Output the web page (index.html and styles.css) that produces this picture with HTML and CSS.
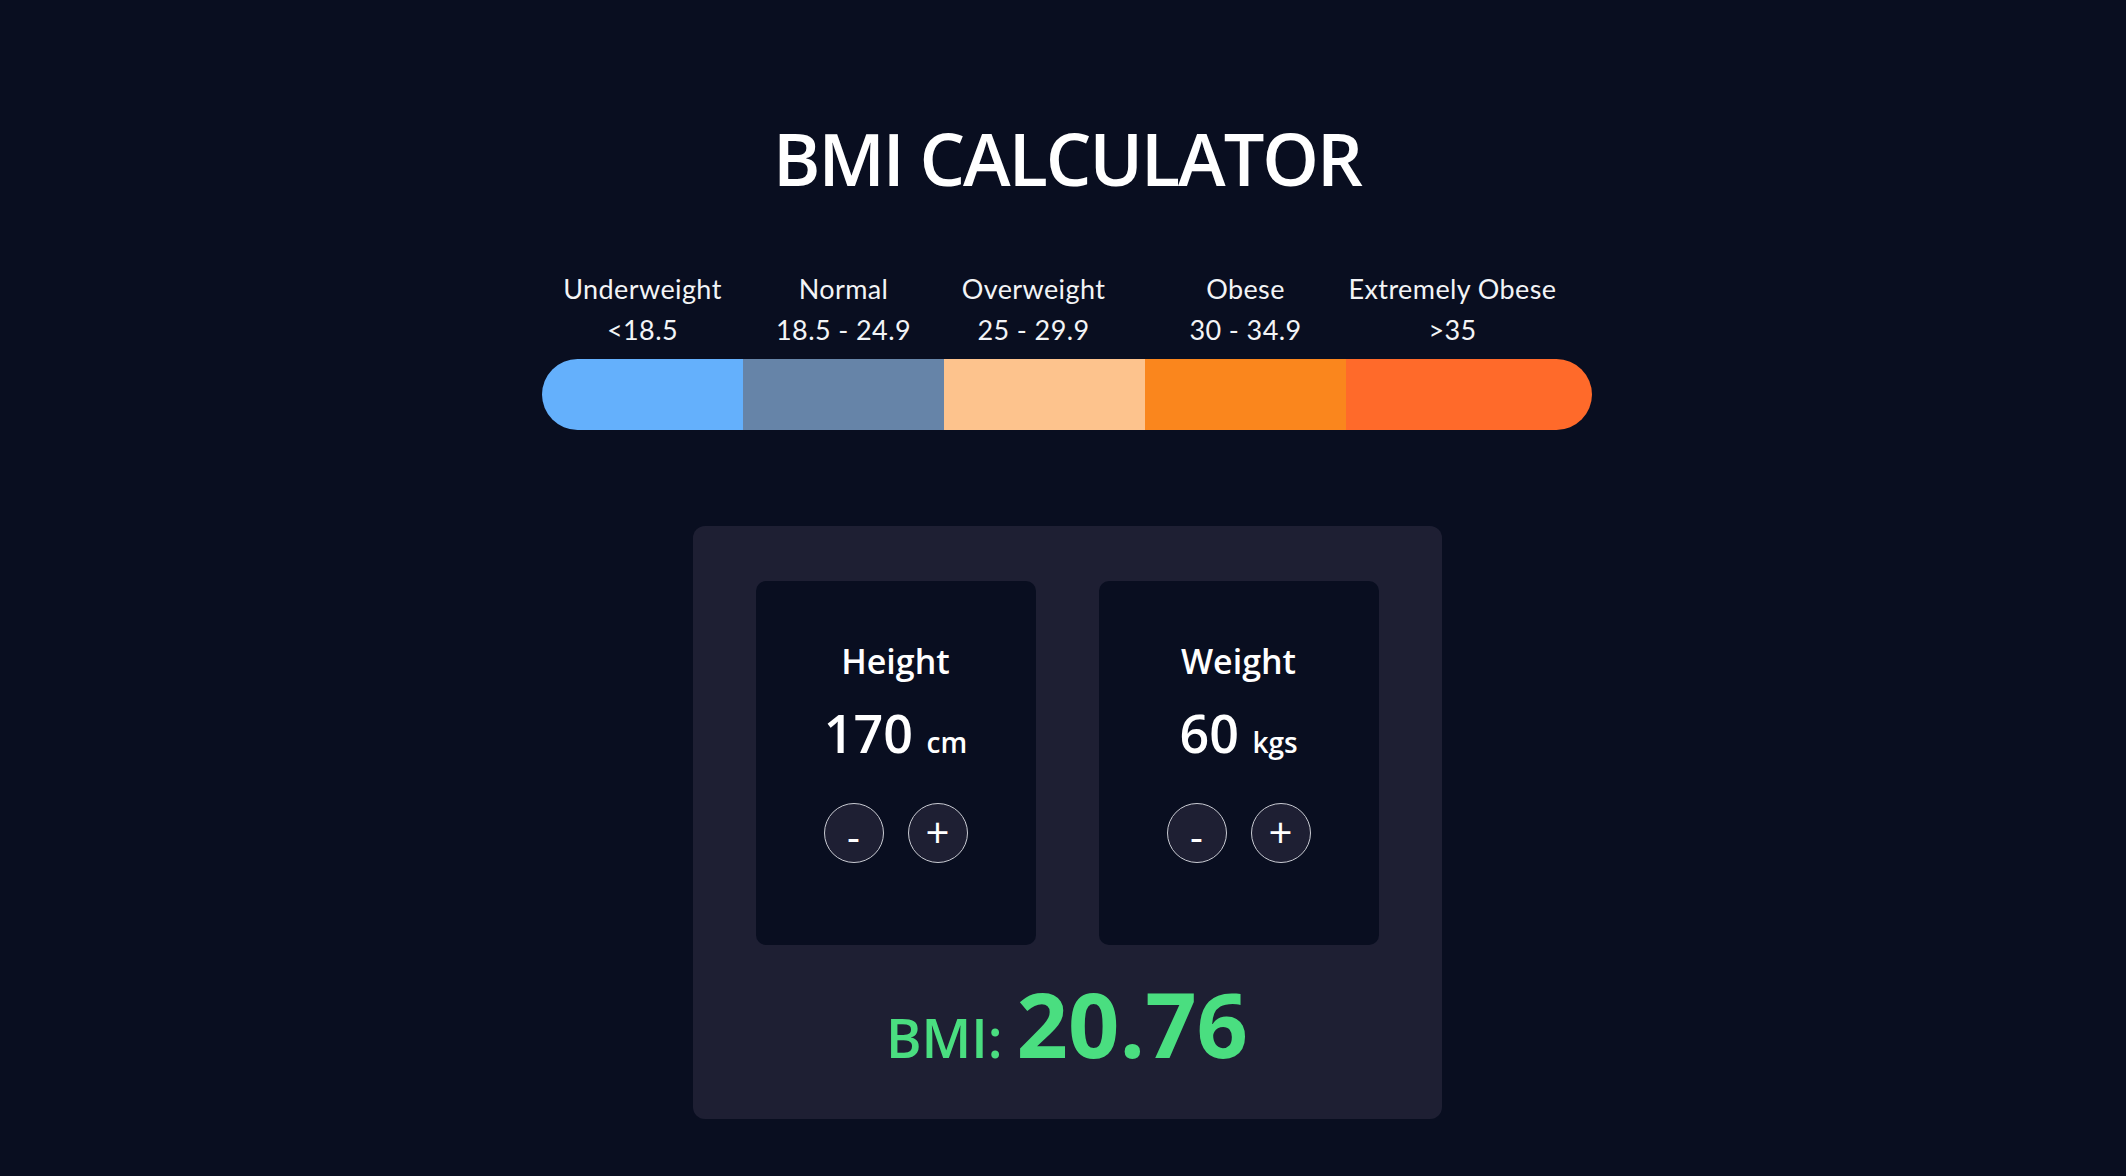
FILE: index.html
```html
<!DOCTYPE html>
<html>
<head>
<meta charset="utf-8">
<link rel="stylesheet" href="styles.css">
</head>
<body>
<main class="page">
  <h1 class="title">BMI CALCULATOR</h1>
  <div class="scale">
    <div class="labels">
      <div class="label"><div>Underweight</div><div>&lt;18.5</div></div>
      <div class="label"><div>Normal</div><div>18.5 - 24.9</div></div>
      <div class="label label-over"><div>Overweight</div><div>25 - 29.9</div></div>
      <div class="label"><div>Obese</div><div>30 - 34.9</div></div>
      <div class="label label-extreme"><div>Extremely Obese</div><div>&gt;35</div></div>
    </div>
    <div class="bar">
      <div class="seg seg-under"></div>
      <div class="seg seg-normal"></div>
      <div class="seg seg-over"></div>
      <div class="seg seg-obese"></div>
      <div class="seg seg-extreme"></div>
    </div>
  </div>
  <section class="card">
    <div class="inputs">
      <div class="input-box">
        <div class="input-title">Height</div>
        <div class="input-value">170 <span class="unit">cm</span></div>
        <div class="buttons">
          <button class="btn btn-minus">-</button>
          <button class="btn">+</button>
        </div>
      </div>
      <div class="input-box">
        <div class="input-title">Weight</div>
        <div class="input-value">60 <span class="unit">kgs</span></div>
        <div class="buttons">
          <button class="btn btn-minus">-</button>
          <button class="btn">+</button>
        </div>
      </div>
    </div>
    <div class="result"><span class="result-label">BMI: </span>20.76</div>
  </section>
</main>
</body>
</html>
```
FILE: styles.css
```css
html, body {
  margin: 0;
  padding: 0;
  background: #090e20;
}
body {
  color: #ffffff;
  font-family: "Open Sans", "Noto Sans", sans-serif;
}
.page {
  padding-left: 8px;
  display: flex;
  flex-direction: column;
  align-items: center;
  min-height: 1176px;
  box-sizing: border-box;
}
.title {
  margin: 122px 0 0 0;
  font-size: 72px;
  line-height: 1;
  font-weight: 600;
  letter-spacing: -2px;
}
.scale {
  margin-top: 74px;
  width: 1050px;
}
.labels {
  display: grid;
  grid-template-columns: 201px 201px 201px 201px 246px;
  font-family: "Lato", "Noto Sans", sans-serif;
  font-size: 27px;
  letter-spacing: 0.4px;
  line-height: 41px;
  text-align: center;
  color: #f3f4f6;
  white-space: nowrap;
}
.label-over {
  padding-right: 22px;
}
.label-extreme {
  padding-right: 33px;
}
.bar {
  margin-top: 9px;
  height: 71px;
  display: grid;
  grid-template-columns: 201px 201px 201px 201px 246px;
  border-radius: 36px;
  overflow: hidden;
}
.seg-under { background: #64b0fc; }
.seg-normal { background: #6684a8; }
.seg-over { background: #fdc38d; }
.seg-obese { background: #fa861d; }
.seg-extreme { background: #ff6a2a; }
.card {
  margin-top: 96px;
  width: 749px;
  box-sizing: border-box;
  padding: 55px 63px 51px;
  background: #1e1f33;
  border-radius: 12px;
}
.inputs {
  display: flex;
  gap: 63px;
}
.input-box {
  flex: 1;
  height: 364px;
  box-sizing: border-box;
  padding-top: 60px;
  background: #090e20;
  border-radius: 10px;
  display: flex;
  flex-direction: column;
  align-items: center;
}
.input-title {
  font-size: 34px;
  line-height: 40px;
  font-weight: 600;
}
.input-value {
  margin-top: 22px;
  font-size: 52px;
  line-height: 60px;
  font-weight: 600;
}
.unit {
  font-size: 28px;
}
.buttons {
  margin-top: 31px;
  display: flex;
  gap: 24px;
}
.btn {
  width: 60px;
  height: 60px;
  border-radius: 50%;
  border: 1px solid #c9cbd3;
  background: #1e1f33;
  color: #ffffff;
  font-family: "Open Sans", sans-serif;
  font-size: 42px;
  font-weight: 400;
  line-height: 1;
  padding: 0 0 2px 0;
  display: flex;
  align-items: center;
  justify-content: center;
}
.btn-minus {
  padding: 6px 0 0 0;
  font-size: 40px;
}
.result {
  margin-top: 33px;
  text-align: center;
  color: #4ade80;
  font-size: 90px;
  line-height: 1;
  font-weight: 700;
}
.result-label {
  font-size: 54px;
  font-weight: 600;
}
```
